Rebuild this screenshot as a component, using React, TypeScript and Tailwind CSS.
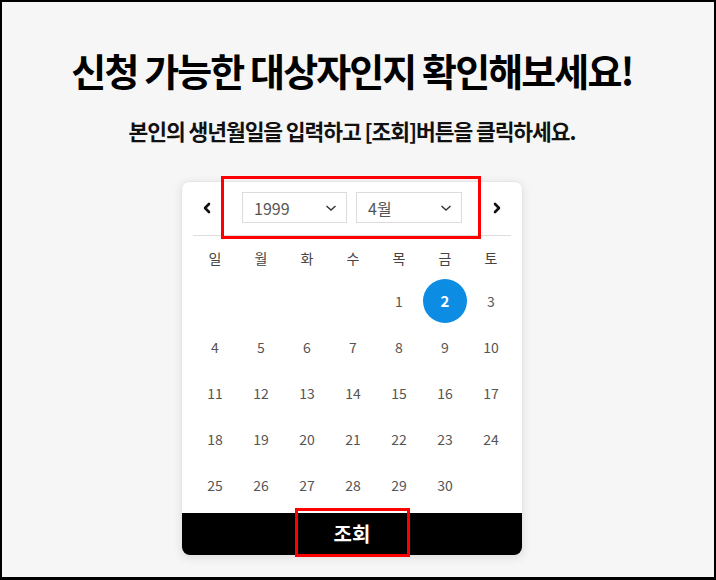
import React from "react";

const days: (number | null)[] = [
  null, null, null, null, 1, 2, 3,
  4, 5, 6, 7, 8, 9, 10,
  11, 12, 13, 14, 15, 16, 17,
  18, 19, 20, 21, 22, 23, 24,
  25, 26, 27, 28, 29, 30, null,
];

const week = ["일", "월", "화", "수", "목", "금", "토"];

function Chevron({ dir }: { dir: "left" | "right" }) {
  return (
    <svg width="10" height="12" viewBox="0 0 10 12">
      <polyline
        points={dir === "left" ? "7,2 3,6 7,10" : "3,2 7,6 3,10"}
        fill="none"
        stroke="#111"
        strokeWidth="2.6"
        strokeLinecap="round"
        strokeLinejoin="round"
      />
    </svg>
  );
}

function Down() {
  return (
    <svg width="12" height="8" viewBox="0 0 12 8">
      <polyline points="1.5,2 6,6 10.5,2" fill="none" stroke="#333" strokeWidth="1.4" />
    </svg>
  );
}

export default function App() {
  return (
    <div
      className="w-[716px] h-[580px] box-border border-black border-t-2 border-l-2 border-r-2 border-b-[3px] bg-[#f6f6f6] overflow-hidden"
      style={{ fontFamily: '"Noto Sans CJK KR", "Noto Sans", sans-serif' }}
    >
      <div className="flex flex-col items-center pr-[12px]">
        <h1 className="mt-[38px] text-[38px] leading-[60px] font-bold tracking-[-0.05em] text-black">
          신청 가능한 대상자인지 확인해보세요!
        </h1>
        <p className="mt-[1px] text-[21.5px] leading-[60px] font-semibold tracking-[-0.05em] text-[#111]">
          본인의 생년월일을 입력하고 [조회]버튼을 클릭하세요.
        </p>
        <div className="relative mt-[20px] w-[342px] bg-white rounded-[8px] border border-[#e6e6e6] shadow-[0_2px_10px_rgba(0,0,0,0.10)]">
          <div className="px-[11px] pt-[10px]">
            <div className="flex items-center h-[31px]">
              <div className="w-[26px] flex justify-center pl-[2px]">
                <Chevron dir="left" />
              </div>
              <div className="ml-[23px] flex gap-[9px]">
                <div className="w-[105px] h-[31px] border border-[#dcdcdc] flex items-center justify-between pl-[11px] pr-[9px] text-[16px] text-[#555]">
                  <span>1999</span>
                  <Down />
                </div>
                <div className="w-[106px] h-[31px] border border-[#dcdcdc] flex items-center justify-between pl-[11px] pr-[9px] text-[16px] text-[#555]">
                  <span>4월</span>
                  <Down />
                </div>
              </div>
              <div className="ml-[22px] w-[26px] flex justify-center">
                <Chevron dir="right" />
              </div>
            </div>
            <div className="mt-[12px] h-px bg-[#dddddd]" />
          </div>
          <div className="pl-[10px] pr-[8px] pb-[5px]">
            <div className="grid grid-cols-7">
              {week.map((w) => (
                <div key={w} className="h-[42px] pt-[2px] flex items-center justify-center text-[14px] text-[#444]">
                  {w}
                </div>
              ))}
            </div>
            <div className="grid grid-cols-7">
              {days.map((d, i) => (
                <div key={i} className="h-[46px] flex items-center justify-center">
                  {d === 2 ? (
                    <div className="w-[44px] h-[44px] rounded-full bg-[#0c8ce3] text-white font-bold text-[15px] flex items-center justify-center">
                      2
                    </div>
                  ) : d ? (
                    <span className="text-[14px] text-[#555]">{d}</span>
                  ) : null}
                </div>
              ))}
            </div>
          </div>
          <div className="h-[42px] bg-black rounded-b-[8px] flex items-center justify-center text-white font-bold text-[20px]">
            조회
          </div>
          <div className="absolute left-[39px] top-[-6px] w-[260px] h-[63px] border-[3px] border-[#ff0000]" />
          <div className="absolute left-[113px] top-[326px] w-[115px] h-[49px] border-[3px] border-[#ff0000]" />
        </div>
      </div>
    </div>
  );
}
